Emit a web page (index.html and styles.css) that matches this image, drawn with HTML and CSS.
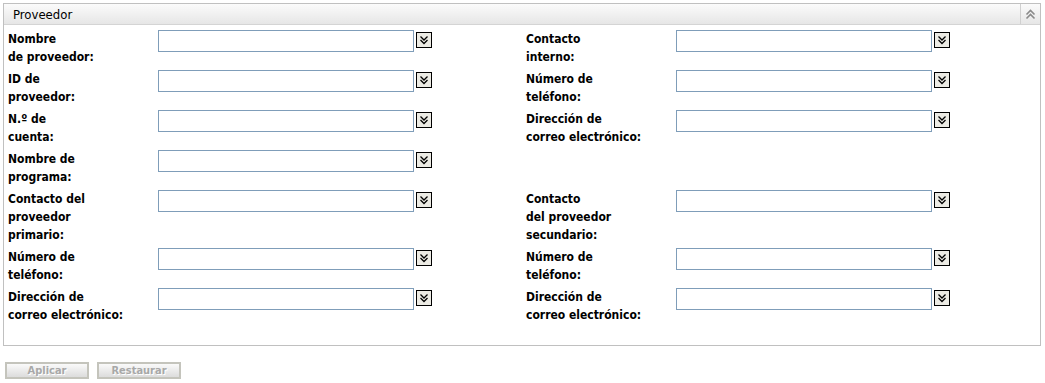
FILE: index.html
```html
<!DOCTYPE html>
<html lang="es">
<head>
<meta charset="utf-8">
<title>Proveedor</title>
<link rel="stylesheet" href="styles.css">
</head>
<body>
<section class="panel">
  <header class="panel-head">
    <span class="panel-title">Proveedor</span>
    <span class="collapse">
      <svg width="11" height="11" viewBox="0 0 11 11"><path d="M1.5 5.5 L5.5 1.5 L9.5 5.5 M1.5 9.5 L5.5 5.5 L9.5 9.5" fill="none" stroke="#8a8a8a" stroke-width="1.6"/></svg>
    </span>
  </header>
  <div class="panel-body">
    <div class="grid">
      <div class="field"><label class="lbl">Nombre<br>de proveedor:</label><div class="ctl"><span class="inp"></span><span class="btn"><svg width="14" height="14" viewBox="0 0 14 14"><path d="M3.5 3.5 L7 7 L10.5 3.5 M3.5 7 L7 10.5 L10.5 7" fill="none" stroke="#000" stroke-width="1.3"/></svg></span></div></div>
      <div class="field"><label class="lbl">Contacto<br>interno:</label><div class="ctl"><span class="inp"></span><span class="btn"><svg width="14" height="14" viewBox="0 0 14 14"><path d="M3.5 3.5 L7 7 L10.5 3.5 M3.5 7 L7 10.5 L10.5 7" fill="none" stroke="#000" stroke-width="1.3"/></svg></span></div></div>

      <div class="field"><label class="lbl">ID de<br>proveedor:</label><div class="ctl"><span class="inp"></span><span class="btn"><svg width="14" height="14" viewBox="0 0 14 14"><path d="M3.5 3.5 L7 7 L10.5 3.5 M3.5 7 L7 10.5 L10.5 7" fill="none" stroke="#000" stroke-width="1.3"/></svg></span></div></div>
      <div class="field"><label class="lbl">Número de<br>teléfono:</label><div class="ctl"><span class="inp"></span><span class="btn"><svg width="14" height="14" viewBox="0 0 14 14"><path d="M3.5 3.5 L7 7 L10.5 3.5 M3.5 7 L7 10.5 L10.5 7" fill="none" stroke="#000" stroke-width="1.3"/></svg></span></div></div>

      <div class="field"><label class="lbl">N.º de<br>cuenta:</label><div class="ctl"><span class="inp"></span><span class="btn"><svg width="14" height="14" viewBox="0 0 14 14"><path d="M3.5 3.5 L7 7 L10.5 3.5 M3.5 7 L7 10.5 L10.5 7" fill="none" stroke="#000" stroke-width="1.3"/></svg></span></div></div>
      <div class="field"><label class="lbl">Dirección de<br>correo electrónico:</label><div class="ctl"><span class="inp"></span><span class="btn"><svg width="14" height="14" viewBox="0 0 14 14"><path d="M3.5 3.5 L7 7 L10.5 3.5 M3.5 7 L7 10.5 L10.5 7" fill="none" stroke="#000" stroke-width="1.3"/></svg></span></div></div>

      <div class="field"><label class="lbl">Nombre de<br>programa:</label><div class="ctl"><span class="inp"></span><span class="btn"><svg width="14" height="14" viewBox="0 0 14 14"><path d="M3.5 3.5 L7 7 L10.5 3.5 M3.5 7 L7 10.5 L10.5 7" fill="none" stroke="#000" stroke-width="1.3"/></svg></span></div></div>
      <div class="field"></div>

      <div class="field"><label class="lbl">Contacto del<br>proveedor<br>primario:</label><div class="ctl"><span class="inp"></span><span class="btn"><svg width="14" height="14" viewBox="0 0 14 14"><path d="M3.5 3.5 L7 7 L10.5 3.5 M3.5 7 L7 10.5 L10.5 7" fill="none" stroke="#000" stroke-width="1.3"/></svg></span></div></div>
      <div class="field"><label class="lbl">Contacto<br>del proveedor<br>secundario:</label><div class="ctl"><span class="inp"></span><span class="btn"><svg width="14" height="14" viewBox="0 0 14 14"><path d="M3.5 3.5 L7 7 L10.5 3.5 M3.5 7 L7 10.5 L10.5 7" fill="none" stroke="#000" stroke-width="1.3"/></svg></span></div></div>

      <div class="field"><label class="lbl">Número de<br>teléfono:</label><div class="ctl"><span class="inp"></span><span class="btn"><svg width="14" height="14" viewBox="0 0 14 14"><path d="M3.5 3.5 L7 7 L10.5 3.5 M3.5 7 L7 10.5 L10.5 7" fill="none" stroke="#000" stroke-width="1.3"/></svg></span></div></div>
      <div class="field"><label class="lbl">Número de<br>teléfono:</label><div class="ctl"><span class="inp"></span><span class="btn"><svg width="14" height="14" viewBox="0 0 14 14"><path d="M3.5 3.5 L7 7 L10.5 3.5 M3.5 7 L7 10.5 L10.5 7" fill="none" stroke="#000" stroke-width="1.3"/></svg></span></div></div>

      <div class="field"><label class="lbl">Dirección de<br>correo electrónico:</label><div class="ctl"><span class="inp"></span><span class="btn"><svg width="14" height="14" viewBox="0 0 14 14"><path d="M3.5 3.5 L7 7 L10.5 3.5 M3.5 7 L7 10.5 L10.5 7" fill="none" stroke="#000" stroke-width="1.3"/></svg></span></div></div>
      <div class="field"><label class="lbl">Dirección de<br>correo electrónico:</label><div class="ctl"><span class="inp"></span><span class="btn"><svg width="14" height="14" viewBox="0 0 14 14"><path d="M3.5 3.5 L7 7 L10.5 3.5 M3.5 7 L7 10.5 L10.5 7" fill="none" stroke="#000" stroke-width="1.3"/></svg></span></div></div>
    </div>
  </div>
</section>
<div class="actions">
  <button class="act" disabled>Aplicar</button>
  <button class="act" disabled>Restaurar</button>
</div>
</body>
</html>
```
FILE: styles.css
```css
html, body { margin: 0; padding: 0; background: #fff; }
body {
  font-family: "DejaVu Sans Condensed", "DejaVu Sans", sans-serif;
  font-size: 12px;
  color: #000;
  padding: 3px 5px 0 3px;
}
.panel {
  border: 1px solid #c0c0c0;
  height: 343px;
  box-sizing: border-box;
  width: 1038px;
}
.panel-head {
  height: 21px;
  display: flex;
  align-items: center;
  justify-content: space-between;
  background: linear-gradient(#fbfbfb, #e6e6e6);
  border-bottom: 1px solid #d4d4d4;
  box-sizing: border-box;
}
.panel-title {
  padding-left: 9px;
  font-size: 13px;
}
.collapse {
  width: 19px;
  height: 100%;
  border-left: 1px solid #d0d0d0;
  display: flex;
  align-items: center;
  justify-content: center;
}
.panel-body {
  padding: 4px 0 0 0;
}
.grid {
  display: grid;
  grid-template-columns: 518px 517px;
}
.field {
  display: flex;
  padding: 1px 4px 3px 4px;
}
.lbl {
  width: 150px;
  flex: none;
  font-weight: bold;
  line-height: 18px;
}
.ctl {
  display: flex;
  align-items: flex-start;
  gap: 2px;
}
.inp {
  width: 256px;
  height: 22px;
  box-sizing: border-box;
  border: 1px solid #7f9db9;
  background: #fff;
}
.btn {
  width: 16px;
  height: 16px;
  box-sizing: border-box;
  border: 1px solid #000;
  background: #ecebe4;
  margin-top: 2px;
  display: flex;
  align-items: center;
  justify-content: center;
}
.actions {
  display: flex;
  gap: 8px;
  padding: 16px 0 0 2px;
}
.act {
  width: 84px;
  height: 17px;
  padding: 0;
  border: 2px solid #c4c4bc;
  background: linear-gradient(#fafafa, #dcdcdc);
  color: #a8a8a8;
  font-family: "DejaVu Sans Condensed", "DejaVu Sans", sans-serif;
  font-size: 11px;
  font-weight: bold;
  text-shadow: 1px 1px 0 #fff;
  box-sizing: border-box;
}
```
